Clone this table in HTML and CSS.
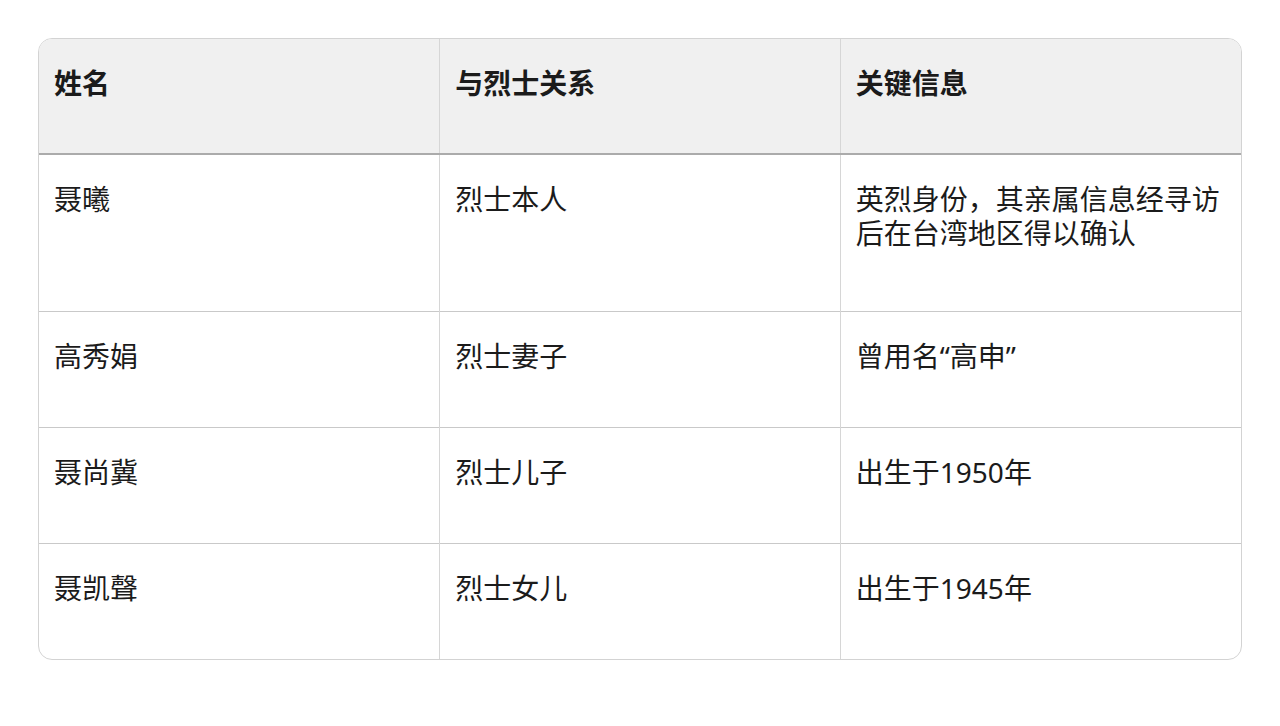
FILE: index.html
```html
<!DOCTYPE html>
<html lang="zh-CN">
<head>
<meta charset="utf-8">
<link rel="stylesheet" href="styles.css">
</head>
<body>
<div class="page">
  <div class="table-wrap">
    <table class="info-table">
      <thead>
        <tr>
          <th>姓名</th>
          <th>与烈士关系</th>
          <th>关键信息</th>
        </tr>
      </thead>
      <tbody>
        <tr class="tall">
          <td>聂曦</td>
          <td>烈士本人</td>
          <td>英烈身份，其亲属信息经寻访后在台湾地区得以确认</td>
        </tr>
        <tr>
          <td>高秀娟</td>
          <td>烈士妻子</td>
          <td>曾用名“高申”</td>
        </tr>
        <tr>
          <td>聂尚冀</td>
          <td>烈士儿子</td>
          <td>出生于1950年</td>
        </tr>
        <tr class="last">
          <td>聂凯聲</td>
          <td>烈士女儿</td>
          <td>出生于1945年</td>
        </tr>
      </tbody>
    </table>
  </div>
</div>
</body>
</html>
```
FILE: styles.css
```css
html, body {
  margin: 0;
  padding: 0;
  background: #ffffff;
}
body {
  font-family: "Noto Sans", "Noto Sans CJK SC", sans-serif;
  color: #1b1b1b;
}
.page {
  padding: 38px 38px 0 38px;
}
.table-wrap {
  width: 1204px;
  border: 1px solid #d3d3d3;
  border-radius: 14px;
  overflow: hidden;
  box-sizing: border-box;
}
.info-table {
  width: 100%;
  border-collapse: collapse;
  table-layout: fixed;
}
.info-table th,
.info-table td {
  text-align: left;
  vertical-align: top;
  font-size: 28px;
  line-height: 34px;
  padding: 27px 15px 54px 15px;
  border-left: 1px solid #d6d6d6;
  word-break: break-all;
}
.info-table th:first-child,
.info-table td:first-child {
  border-left: none;
}
.info-table th {
  background: #f0f0f0;
  font-weight: 700;
  padding-bottom: 53px;
  border-bottom: 2px solid #ababab;
}
.info-table tbody tr + tr td {
  border-top: 1px solid #c9c9c9;
}
.info-table tr.tall td {
  padding-bottom: 61px;
}
.info-table tr.last td {
  padding-bottom: 54px;
}
```
